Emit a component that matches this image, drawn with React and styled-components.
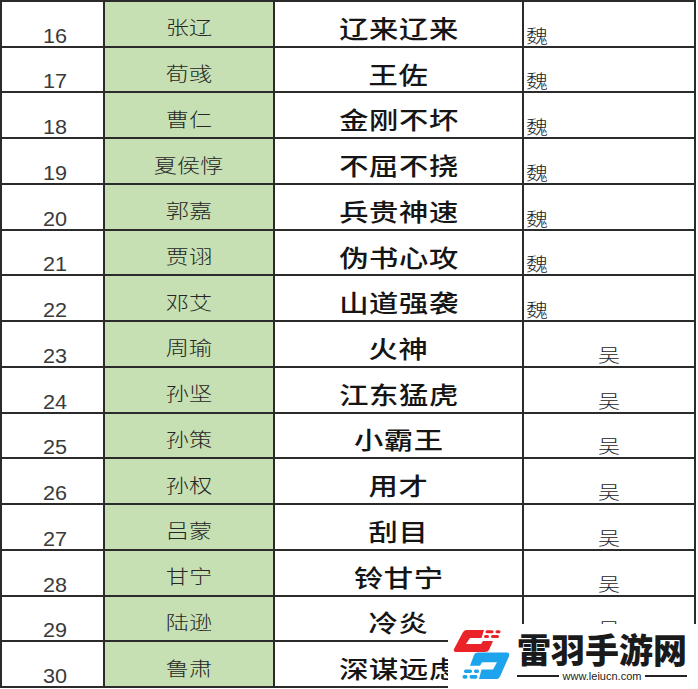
import React from "react";
import styled, { createGlobalStyle } from "styled-components";

const rows = [
  { no: 16, name: "张辽", skill: "辽来辽来", camp: "魏" },
  { no: 17, name: "荀彧", skill: "王佐", camp: "魏" },
  { no: 18, name: "曹仁", skill: "金刚不坏", camp: "魏" },
  { no: 19, name: "夏侯惇", skill: "不屈不挠", camp: "魏" },
  { no: 20, name: "郭嘉", skill: "兵贵神速", camp: "魏" },
  { no: 21, name: "贾诩", skill: "伪书心攻", camp: "魏" },
  { no: 22, name: "邓艾", skill: "山道强袭", camp: "魏" },
  { no: 23, name: "周瑜", skill: "火神", camp: "吴" },
  { no: 24, name: "孙坚", skill: "江东猛虎", camp: "吴" },
  { no: 25, name: "孙策", skill: "小霸王", camp: "吴" },
  { no: 26, name: "孙权", skill: "用才", camp: "吴" },
  { no: 27, name: "吕蒙", skill: "刮目", camp: "吴" },
  { no: 28, name: "甘宁", skill: "铃甘宁", camp: "吴" },
  { no: 29, name: "陆逊", skill: "冷炎", camp: "吴" },
  { no: 30, name: "鲁肃", skill: "深谋远虑", camp: "吴" },
];

const GlobalStyle = createGlobalStyle`
  html, body {
    margin: 0;
    padding: 0;
    background: #fff;
  }
  body {
    font-family: "Noto Sans CJK SC", "Liberation Sans", sans-serif;
  }
`;

const Page = styled.div`
  position: relative;
  width: 698px;
  height: 689px;
  overflow: hidden;
  background: #fff;
`;

const Sheet = styled.div`
  display: grid;
  grid-template-columns: 101px 168px 247px 170px;
  grid-template-rows: repeat(15, 1fr);
  gap: 2px;
  padding: 2px;
  width: 696px;
  height: 688px;
  box-sizing: border-box;
  background: #2b2b2b;
`;

const Cell = styled.div`
  display: flex;
  min-height: 0;
  background: ${(p) => (p.green ? "#c6e0b4" : "#fff")};
  align-items: ${(p) => p.valign || "center"};
  justify-content: ${(p) => p.halign || "center"};
  padding: ${(p) => p.pad || "0"};
`;

const Wide = styled.span`
  display: inline-block;
  line-height: 1;
  white-space: nowrap;
  transform: scaleX(1.22);
  transform-origin: ${(p) => p.origin || "center"};
`;

const Num = styled(Wide)`
  font-family: "Liberation Sans", Arial, sans-serif;
  font-size: 20px;
  color: #3a3a3a;
  transform: scaleX(1.08);
`;

const Name = styled(Wide)`
  font-size: 19px;
  font-weight: 300;
  color: #262626;
`;

const Skill = styled(Wide)`
  font-size: 24px;
  font-weight: 500;
  color: #151515;
  letter-spacing: 0.5px;
`;

const Camp = styled(Wide)`
  font-size: 18px;
  font-weight: 300;
  color: #222;
`;

const Mark = styled.div`
  position: absolute;
  left: 448px;
  top: 624px;
  width: 250px;
  height: 65px;
  background: #fff;
  display: flex;
  align-items: flex-start;
  gap: 6px;
  padding: 6px 0 0 5px;
  box-sizing: border-box;
`;

const MarkText = styled.div`
  display: flex;
  flex-direction: column;
  align-items: stretch;
  width: 170px;
  margin-top: -1px;
`;

const MarkTitle = styled.div`
  font-size: 34px;
  font-weight: 900;
  line-height: 40px;
  color: #1a1a1a;
  white-space: nowrap;
`;

const MarkUrl = styled.div`
  display: flex;
  align-items: center;
  gap: 4px;
  font-family: "Liberation Sans", Arial, sans-serif;
  font-size: 11px;
  color: #222;
  line-height: 14px;
  &::before,
  &::after {
    content: "";
    flex: 1;
    height: 1.5px;
    background: #222;
  }
`;

const half =
  "M14 0 L31 0 L28.5 8 L17 8 L13 14 L28 14 L30 11 L40 11 L36 20 Q35 22 32 22 L3 22 Q0 22 1 19 L9.5 3 Q11 0 14 0 Z";

const Half = () => (
  <>
    <path d={half} />
    <rect x="32.5" y="0.3" width="8" height="3" rx="1.5" />
    <rect x="42.5" y="0.3" width="5" height="3" rx="1.5" />
    <rect x="31" y="5" width="5" height="3" rx="1.5" />
    <rect x="38" y="5" width="8" height="3" rx="1.5" />
  </>
);

const Logo = () => (
  <svg width="58" height="50" viewBox="0 0 58 50">
    <g fill="#ea2328">
      <Half />
    </g>
    <g fill="#1ea4ec" transform="translate(57 49) rotate(180) scale(1 1.2)">
      <Half />
    </g>
  </svg>
);

export default function App() {
  return (
    <Page>
      <GlobalStyle />
      <Sheet>
        {rows.map((r) => (
          <React.Fragment key={r.no}>
            <Cell valign="flex-end" halign="flex-start" pad="0 0 0 41px">
              <Num origin="left">{r.no}</Num>
            </Cell>
            <Cell green pad="6px 0 0 0">
              <Name>{r.name}</Name>
            </Cell>
            <Cell pad="8px 0 0 0">
              <Skill>{r.skill}</Skill>
            </Cell>
            {r.camp === "魏" ? (
              <Cell valign="flex-end" halign="flex-start" pad="0 0 2px 2px">
                <Camp origin="left">{r.camp}</Camp>
              </Cell>
            ) : (
              <Cell valign="flex-end" pad="0 0 3px 0">
                <Camp>{r.camp}</Camp>
              </Cell>
            )}
          </React.Fragment>
        ))}
      </Sheet>
      <Mark>
        <Logo />
        <MarkText>
          <MarkTitle>雷羽手游网</MarkTitle>
          <MarkUrl>www.leiucn.com</MarkUrl>
        </MarkText>
      </Mark>
    </Page>
  );
}
